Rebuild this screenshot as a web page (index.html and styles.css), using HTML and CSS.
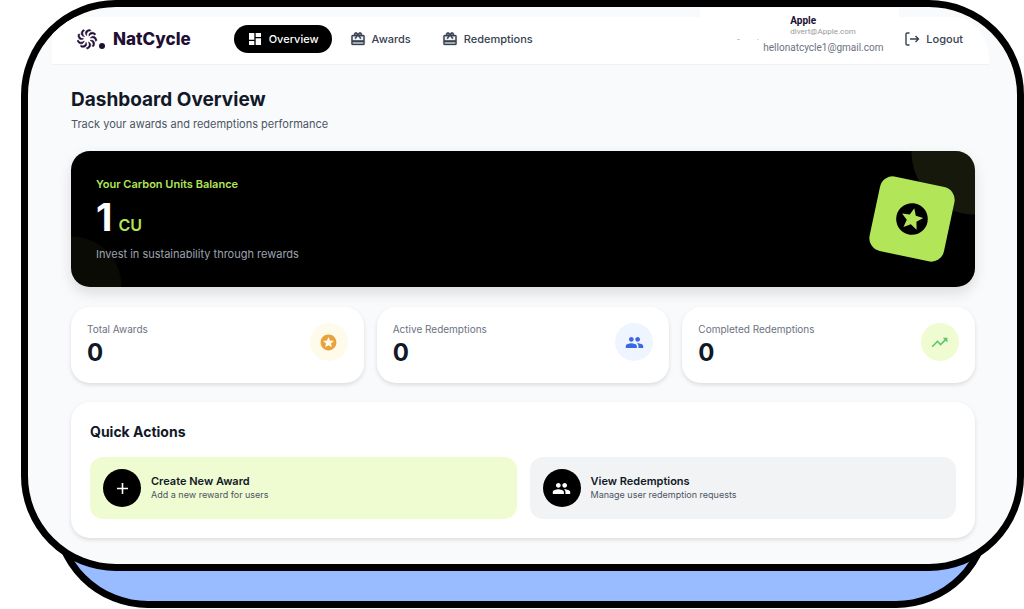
FILE: index.html
```html
<!DOCTYPE html><html lang="en"><head><meta charset="utf-8"><meta name="viewport" content="width=device-width"><link rel="icon" href="data:">
<title>NatCycle Dashboard</title>
<link rel="stylesheet" href="styles.css">
</head>
<body>
<svg class="defs" width="0" height="0" aria-hidden="true">
  <symbol id="i-gift" viewBox="0 0 24 24"><path d="M20 6h-2.18c.11-.31.18-.65.18-1 0-1.66-1.34-3-3-3-1.05 0-1.96.54-2.5 1.35l-.5.67-.5-.68C10.96 2.54 10.05 2 9 2 7.34 2 6 3.34 6 5c0 .35.07.69.18 1H4c-1.11 0-1.99.89-1.99 2L2 19c0 1.11.89 2 2 2h16c1.11 0 2-.89 2-2V8c0-1.11-.89-2-2-2zm-5-2c.55 0 1 .45 1 1s-.45 1-1 1-1-.45-1-1 .45-1 1-1zM9 4c.55 0 1 .45 1 1s-.45 1-1 1-1-.45-1-1 .45-1 1-1zm11 15H4v-2h16v2zm0-5H4V8h5.08L7 10.83 8.62 12 11 8.76l1-1.36 1 1.36L15.38 12 17 10.83 14.92 8H20v6z"/></symbol>
  <symbol id="i-people" viewBox="0 0 24 24"><path d="M16 11c1.66 0 2.99-1.34 2.99-3S17.66 5 16 5s-3 1.34-3 3 1.34 3 3 3zm-8 0c1.66 0 2.99-1.34 2.99-3S9.66 5 8 5 5 6.34 5 8s1.34 3 3 3zm0 2c-2.33 0-7 1.17-7 3.5V19h14v-2.5c0-2.33-4.67-3.5-7-3.5zm8 0c-.29 0-.62.02-.97.05 1.16.84 1.97 1.97 1.97 3.45V19h6v-2.5c0-2.33-4.67-3.5-7-3.5z"/></symbol>
  <symbol id="i-star" viewBox="0 0 24 24"><path d="M11.99 2C6.47 2 2 6.48 2 12s4.47 10 9.99 10C17.52 22 22 17.52 22 12S17.52 2 11.99 2zm4.24 16L12 15.45 7.77 18l1.12-4.81-3.73-3.23 4.92-.42L12 5l1.92 4.53 4.92.42-3.73 3.23L16.23 18z"/></symbol>
</svg>

<div class="backdrop">
<div class="frame">
<header>
  <a class="logo" href="#">
    <svg width="30" height="22" viewBox="0 0 30 22" aria-hidden="true">
      <g id="swirl" transform="translate(10 11)"></g>
      <circle cx="25" cy="18" r="3"/>
    </svg>
    NatCycle
  </a>
  <nav>
    <a class="active" href="#"><svg class="icon" viewBox="0 0 24 24"><path d="M3 13h8V3H3v10zm0 8h8v-6H3v6zm10 0h8V11h-8v10zm0-18v6h8V3h-8z"/></svg>Overview</a>
    <a href="#"><svg class="icon gift"><use href="#i-gift"/></svg>Awards</a>
    <a href="#"><svg class="icon gift"><use href="#i-gift"/></svg>Redemptions</a>
  </nav>
  <div class="account">
    <strong>Apple</strong>
    <small>divert@Apple.com</small>
    <span>hellonatcycle1@gmail.com</span>
  </div>
  <button class="logout" type="button">
    <svg class="icon line" viewBox="0 0 16 16"><path d="M5.500 2H3.200Q2 2 2 3.200V12.800Q2 14 3.200 14H5.500M6 8H14.500M11.500 5L14.500 8L11.500 11"/></svg>Logout
  </button>
</header>

<main>
  <h1>Dashboard Overview</h1>
  <p class="lead">Track your awards and redemptions performance</p>

  <section class="balance">
    <div>
      <h2>Your Carbon Units Balance</h2>
      <p class="units"><b>1</b><span>CU</span></p>
      <p class="note">Invest in sustainability through rewards</p>
    </div>
    <div class="badge"><svg><use href="#i-star"/></svg></div>
  </section>

  <section class="stats">
    <div class="card">
      <div><h3>Total Awards</h3><p>0</p></div>
      <div class="round amber"><svg><use href="#i-star"/></svg></div>
    </div>
    <div class="card">
      <div><h3>Active Redemptions</h3><p>0</p></div>
      <div class="round blue"><svg><use href="#i-people"/></svg></div>
    </div>
    <div class="card">
      <div><h3>Completed Redemptions</h3><p>0</p></div>
      <div class="round green"><svg viewBox="0 0 24 24"><path d="M16 6l2.290 2.290-4.880 4.880-4-4L2 16.590 3.410 18l6-6 4 4 6.300-6.290L22 12V6z"/></svg></div>
    </div>
  </section>

  <section class="quick">
    <h2>Quick Actions</h2>
    <div class="actions">
      <button class="create" type="button">
        <span class="round dark"><svg viewBox="0 0 24 24"><path d="M19 13h-6v6h-2v-6H5v-2h6V5h2v6h6v2z"/></svg></span>
        <span><b>Create New Award</b><small>Add a new reward for users</small></span>
      </button>
      <button type="button">
        <span class="round dark"><svg><use href="#i-people"/></svg></span>
        <span><b>View Redemptions</b><small>Manage user redemption requests</small></span>
      </button>
    </div>
  </section>
</main>
</div>
</div>

<script>
// logo: nine blades around the center
const swirl = document.getElementById("swirl");
for (let i = 0; i < 9; i++) {
  const p = document.createElementNS("http://www.w3.org/2000/svg", "path");
  p.setAttribute("d", "M-.3 -3.400C-2.800 -5.800 -1.800 -9.200 2.800 -9.600C3.600 -9.200 3.800 -8.600 3.600 -8C1 -8.400 -.8 -6.600 -.3 -3.400Z");
  p.setAttribute("transform", "rotate(" + i * 40 + ")");
  swirl.appendChild(p);
}
</script>
</body>
</html>
```
FILE: styles.css
```css
:root {
  --lime: #b2e558;
  --lime-pale: #effbd0;
  --ink: #111827;
  --gray: #4b5563;
}
* {
  box-sizing: border-box;
}
body {
  margin: 0;
  background: #fff;
  color: var(--ink);
  font-family: Inter, "Liberation Sans", sans-serif;
}
h1, h2, h3, p {
  margin: 0;
}
svg {
  fill: currentColor;
  flex: none;
}
button {
  font: inherit;
  color: inherit;
  border: 0;
  background: none;
  padding: 0;
  text-align: left;
  cursor: pointer;
}
.defs {
  display: block;
}
.backdrop {
  margin: 0 33px 0 53px;
  border: 7px solid #000;
  border-radius: 95px;
  background: #99bbff;
}
.frame {
  margin: -7px -40px 30px -39px;
  padding-top: 10px;
  border: 7px solid #000;
  border-radius: 95px;
  background: #f9fafc;
  overflow: hidden;
}

header {
  display: flex;
  align-items: center;
  height: 47px;
  margin: 0 27px 0 24px;
  padding: 0 27px 3px 25px;
  border-top-right-radius: 36px 47px;
  background: #fff;
  box-shadow: 0 1px 1px rgba(0, 0, 0, 0.04);
}
.logo {
  display: flex;
  align-items: center;
  gap: 6px;
  color: #210e35;
  font-size: 17px;
  font-weight: 800;
  line-height: 20px;
  text-decoration: none;
}
#swirl {
  stroke: currentColor;
  stroke-width: 0.5;
}
nav {
  display: flex;
  gap: 5px;
  margin-left: 43px;
}
nav a, .logout {
  display: flex;
  align-items: center;
  gap: 6px;
  color: #374151;
  font-size: 11px;
  font-weight: 500;
  text-decoration: none;
}
nav a {
  height: 28px;
  padding: 0 13px;
  border-radius: 14px;
}
nav a.active {
  background: #000;
  color: #fff;
}
.icon {
  width: 16px;
  height: 16px;
}
.gift {
  stroke: currentColor;
  stroke-width: 0.5;
}
.line {
  fill: none;
  stroke: currentColor;
  stroke-width: 1.4;
}
.account {
  display: flex;
  flex-direction: column;
  align-self: flex-start;
  width: 199px;
  height: 56px;
  margin: -9px 5px 0 auto;
  padding: 7px 0 0 63px;
  background:
    linear-gradient(#ccc, #ccc) 37px 31px / 3px 1px no-repeat,
    linear-gradient(#ddd, #ddd) 57px 31px / 2px 1px no-repeat,
    #fff;
  color: #6b7280;
  font-family: Roboto, "Liberation Sans", sans-serif;
  font-size: 10px;
  line-height: 12px;
}
.account strong {
  padding-left: 27px;
  color: #210e35;
}
.account small {
  padding-left: 27px;
  color: #999;
  font-size: 8px;
  line-height: 10px;
}
.account span {
  margin-top: 5px;
}

main {
  padding: 23px 42px 26px 43px;
}
h1 {
  font-size: 19px;
  line-height: 26px;
}
.lead {
  margin-top: 3px;
  color: var(--gray);
  font-size: 11px;
  line-height: 16px;
}
.balance {
  display: flex;
  align-items: center;
  justify-content: space-between;
  margin-top: 19px;
  padding: 25px;
  border-radius: 19px;
  color: #fff;
  background:
    radial-gradient(circle at 100% 0, #15180b 63px, transparent 64px),
    radial-gradient(circle at 0 100%, #090b04 50px, transparent 51px),
    #000;
  box-shadow: 0 6px 14px rgba(0, 0, 0, 0.12);
}
.balance h2 {
  color: var(--lime);
  font-size: 11px;
  font-weight: 600;
  line-height: 16px;
}
.units {
  display: flex;
  align-items: baseline;
  gap: 6px;
  margin: 6px 0 10px;
  font-size: 38px;
  line-height: 38px;
}
.units span {
  color: var(--lime);
  font-size: 16px;
  font-weight: 600;
  line-height: 16px;
}
.note {
  color: #9ca3af;
  font-size: 11px;
  line-height: 16px;
}
.badge {
  display: flex;
  align-items: center;
  justify-content: center;
  width: 76px;
  height: 76px;
  border-radius: 13px;
  background: var(--lime);
  color: #000;
  transform: rotate(12deg);
}
.badge svg {
  width: 38px;
  height: 38px;
}

.stats {
  display: grid;
  grid-template-columns: repeat(3, 1fr);
  gap: 13px;
  margin-top: 20px;
}
.card, .quick {
  border-radius: 19px;
  background: #fff;
  box-shadow: 0 2px 4px rgba(0, 0, 0, 0.12);
}
.card {
  display: flex;
  justify-content: space-between;
  padding: 16px;
}
.card h3 {
  color: #6b7280;
  font-size: 10px;
  font-weight: 400;
  line-height: 12px;
}
.card p {
  margin-top: 4px;
  font-size: 24px;
  font-weight: 700;
  line-height: 28px;
}
.round {
  display: flex;
  flex: none;
  align-items: center;
  justify-content: center;
  width: 38px;
  height: 38px;
  border-radius: 50%;
}
.round svg {
  width: 19px;
  height: 19px;
}
.amber {
  background: #fffbeb;
  color: #e9a23b;
}
.blue {
  background: #eff5ff;
  color: #3b66e6;
}
.green {
  background: var(--lime-pale);
  color: #5fc46f;
}
.dark {
  background: #000;
  color: #fff;
}

.quick {
  margin-top: 19px;
  padding: 19px;
}
.quick h2 {
  font-size: 14px;
  line-height: 22px;
}
.actions {
  display: grid;
  grid-template-columns: 1fr 1fr;
  gap: 13px;
  margin-top: 14px;
}
.actions button {
  display: flex;
  align-items: center;
  gap: 10px;
  padding: 12px 13px;
  border-radius: 13px;
  background: #f2f3f5;
}
.actions .create {
  background: var(--lime-pale);
}
.actions b, .actions small {
  display: block;
  line-height: 14px;
}
.actions b {
  font-size: 11px;
  font-weight: 600;
}
.actions small {
  color: var(--gray);
  font-size: 9px;
}
```
